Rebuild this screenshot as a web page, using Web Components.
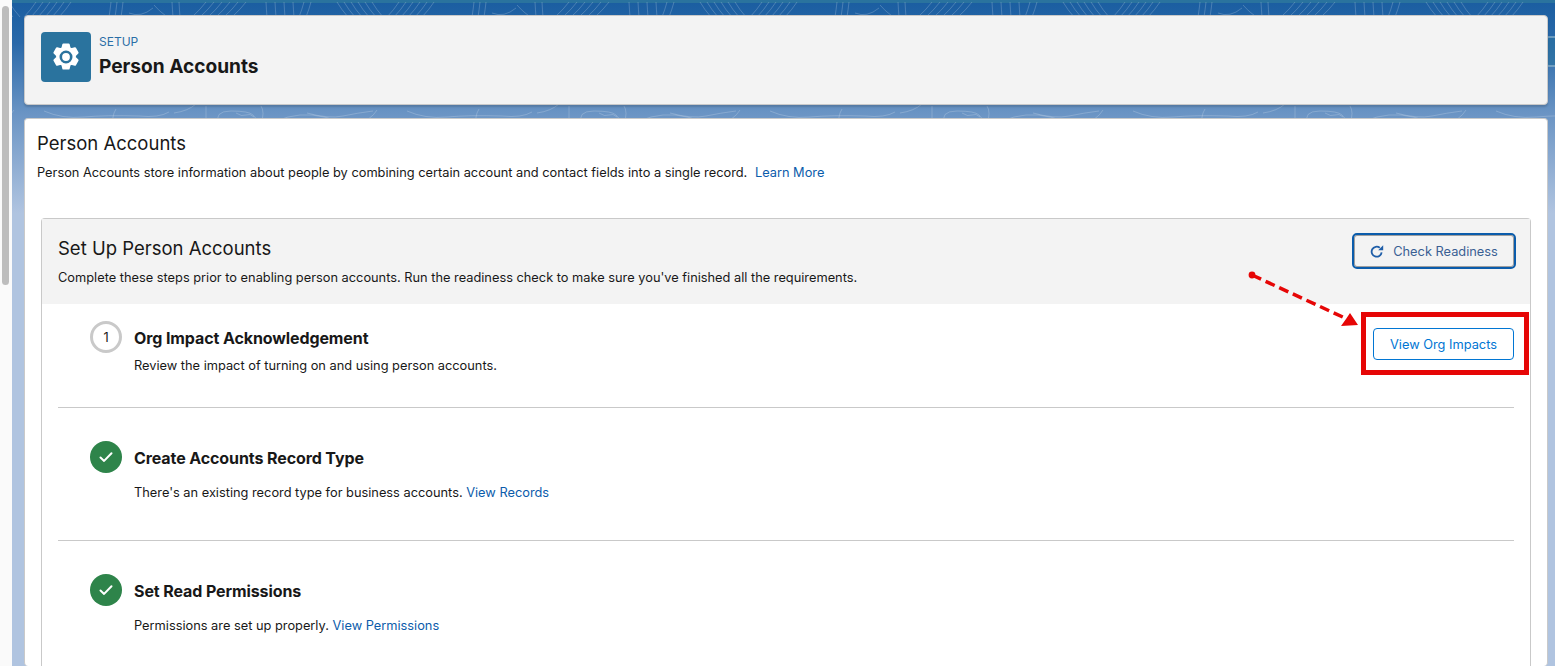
<!DOCTYPE html>
<html lang="en"><head><meta charset="utf-8"><title>Person Accounts</title>
<style>
html,body{margin:0;height:666px;overflow:hidden;background:#fff}
body{font-family:Inter,"Liberation Sans",sans-serif;color:#181818}
</style></head><body>
<setup-app>
  <page-header slot="header" eyebrow="SETUP" title="Person Accounts"></page-header>
  <intro-block title="Person Accounts" link="Learn More">Person Accounts store information about people by combining certain account and contact fields into a single record.</intro-block>
  <setup-panel title="Set Up Person Accounts" desc="Complete these steps prior to enabling person accounts. Run the readiness check to make sure you've finished all the requirements.">
    <setup-step num="1" title="Org Impact Acknowledgement" action="View Org Impacts" variant="first">Review the impact of turning on and using person accounts.</setup-step>
    <setup-step done title="Create Accounts Record Type" link="View Records">There's an existing record type for business accounts.</setup-step>
    <setup-step done title="Set Read Permissions" link="View Permissions">Permissions are set up properly.</setup-step>
  </setup-panel>
</setup-app>
<script>
const def=(n,f)=>customElements.define(n,class extends HTMLElement{connectedCallback(){if(!this.shadowRoot){this.attachShadow({mode:'open'}).innerHTML=f(this)}}});
const contours=(()=>{
  const hatch=(x,n,step,dx,h=15)=>{let s='';for(let i=0;i<n;i++)s+=`<path d="M${x+i*step} -1q${dx*.4} ${h*.5} ${dx} ${h}"/>`;return s};
  const tile=hatch(0,6,7,11)+hatch(62,6,7,-12)+hatch(137,3,6,-2)+`<path d="M155 10q12 5 24 -5"/><path d="M180 2q5 6 12 11"/>`+hatch(198,2,7,1)
    +hatch(232,6,8,-14)+hatch(292,4,9,1)+hatch(330,2,7,-5)
    +`<path d="M-30 110q22 6 36 3t30 -5"/><path d="M40 107q-6 10 -20 14"/><path d="M70 108q18 8 40 6t55 -1q20 2 30 -4"/><path d="M200 110q14 -2 22 -9"/><path d="M232 103v16"/><path d="M245 122q-6 -14 12 -14t22 4q8 8 4 12"/><path d="M262 110q6 4 10 2t8 2"/><path d="M287 103q4 6 0 18"/><path d="M302 118q24 -10 48 -4t20 8"/><path d="M-8 121q14 -8 34 -3"/><path d="M140 122q-3 -8 2 -16"/>`
    +`<path d="M12 30q4 14 0 30t6 30"/><path d="M20 60q-5 12 0 30"/>`;
  let s='';for(let i=-1;i<5;i++)s+=`<g transform="translate(${i*363+325} 3)">${tile}</g>`;return s})();
def('setup-app',()=>`<style>
:host{display:flex;width:1555px;height:666px;overflow:hidden}
.rail{flex:0 0 12px;background:#fafafa;padding:6px 0 0 2px;box-sizing:border-box}
.thumb{width:7px;height:279px;background:#bdbdbd;border-radius:4px}
.stage{position:relative;flex:1;min-width:0;padding:12px 7px 0 12px;box-sizing:border-box;display:flex;flex-direction:column;gap:13px;
 background:linear-gradient(#1b5ea1 0,#2a69a9 40px,#6a94c4 110px,#b0c4e0 210px,#b0c4e0 100%);border-top:3px solid #2a739e}
.lines{position:absolute;left:0;top:-3px;width:1543px;height:125px;fill:none;stroke:rgba(255,255,255,.2);stroke-width:1}
.tab{position:absolute;right:0;top:33px;width:10px;height:31px;box-sizing:border-box;border:2px solid rgba(255,255,255,.3);border-right:0;border-radius:4px 0 0 4px;background:rgba(42,115,158,.55)}
::slotted(*),.c{position:relative}
</style><div class="rail"><div class="thumb"></div></div>
<div class="stage"><svg class="lines" viewBox="0 0 1543 125" aria-hidden="true">${contours}</svg><span class="tab"></span><slot name="header"></slot><main-card class="c"><slot></slot></main-card></div>`);
def('main-card',()=>`<style>:host{display:block;background:#fff;border-radius:4px;border:1px solid #c9c9c9;border-bottom:0;padding:11px 16px 0 12px;flex:1;box-sizing:border-box;min-height:548px}</style><slot></slot>`);
def('page-header',e=>`<style>
:host{display:flex;flex:0 0 90px;align-items:flex-start;gap:8px;height:90px;box-sizing:border-box;padding:16px 16px 0;background:#f3f3f3;border:1px solid #c9c9c9;border-radius:4px;box-shadow:0 2px 2px rgba(0,0,0,.15)}
.ic{width:50px;height:50px;background:#2a739e;border-radius:4px;display:flex;align-items:center;justify-content:center}
.tx{margin-top:2px}
.eb{font-size:12px;line-height:15px;color:#2a6ea6;margin-bottom:4px}
h1{margin:0;font-size:19.1px;line-height:26px;font-weight:700;color:#181818}
</style><div class="ic"><svg width="30" height="30" viewBox="0 0 30 30"><path fill="#fff" stroke="#fff" stroke-width="2.200" stroke-linejoin="round" d="M12.400 2.600h5.200l.9 3.700 1.800 1 3.700-1 2.500 4.500-2.700 2.600v2.200l2.700 2.600-2.500 4.500-3.700-1-1.800 1-.9 3.700h-5.200l-.9-3.700-1.800-1-3.700 1-2.500-4.500 2.700-2.600v-2.200l-2.700-2.600 2.500-4.500 3.700 1 1.800-1z"/><circle cx="15" cy="15" r="5.200" fill="none" stroke="#2a739e" stroke-width="2.600"/></svg></div>
<div class="tx"><div class="eb">${e.getAttribute('eyebrow')}</div><h1>${e.getAttribute('title')}</h1></div>`);
def('intro-block',e=>`<style>
:host{display:block;height:88px}
h2{margin:0 0 7px;font-size:18.5px;line-height:26px;font-weight:400}
p{margin:0;font-size:12.8px;line-height:19px;white-space:nowrap}
a{color:#0b5cab;text-decoration:none;margin-left:4px}
</style><h2>${e.getAttribute('title')}</h2><p><slot></slot> <a href="#">${e.getAttribute('link')}</a></p>`);
def('setup-panel',e=>`<style>
:host{display:block;margin-left:4px;width:1490px;border:1px solid #c9c9c9;border-bottom:0;border-radius:4px 4px 0 0;height:460px;box-sizing:border-box;overflow:visible;position:relative}
header{height:85px;background:#f3f3f3;box-sizing:border-box;padding:16px 14px 0 16px;display:flex;justify-content:space-between;align-items:flex-start;position:relative}
h2{margin:0 0 7px;font-size:18.5px;line-height:26px;font-weight:400}
p{margin:0;font-size:12.8px;line-height:19px}
button{width:164px;height:36px;margin-top:-2px;background:#f3f3f3;border:2px solid #0b5cab;box-shadow:inset 0 0 0 1px rgba(90,90,90,.55);border-radius:5px;color:#3a5f93;font:400 12.8px Inter,"Liberation Sans",sans-serif;display:flex;align-items:center;justify-content:center;gap:9px;padding:0}
.steps{padding:0 16px}
.note{position:absolute;left:1207px;top:53px;width:290px;height:110px;overflow:visible;pointer-events:none}
.box{position:absolute;left:1319px;top:93px;width:168px;height:63px;box-sizing:border-box;border:5px solid #e60606}
</style><header><div><h2>${e.getAttribute('title')}</h2><p>${e.getAttribute('desc')}</p></div>
<button><svg width="14" height="14" viewBox="0 0 14 14" fill="none"><path d="M11.600 8.300A5 5 0 1 1 9.800 3.800" stroke="#1f5ea8" stroke-width="1.800"/><path d="M13.200 1.200v5H8.200z" fill="#1f5ea8"/></svg>Check Readiness</button></header>
<div class="steps"><slot></slot></div>
<div class="box"></div>
<svg class="note" viewBox="0 0 290 110" aria-hidden="true"><circle cx="3" cy="3" r="3.400" fill="#e60606"/><path d="M3 3 L98 47" stroke="#e60606" stroke-width="3.500" stroke-dasharray="10 5" fill="none"/><path d="M109 53 L92 54 L97 47 L101 41z" fill="#e60606"/></svg>`);
def('setup-step',e=>{const done=e.hasAttribute('done');const first=e.getAttribute('variant')==='first';return `<style>
:host{display:block;position:relative;box-sizing:border-box;height:${first?103.5:133}px;border-bottom:1px solid #c9c9c9;padding-top:${first?17:33}px;padding-left:32px}
:host(:last-of-type){border-bottom:0}
.row{display:flex;gap:12px}
.i{flex:0 0 32px;width:32px;height:32px;box-sizing:border-box;border-radius:50%;display:flex;align-items:center;justify-content:center}
.n{border:3px solid #c9c9c9;font-size:12.8px;background:#fff}
.d{background:#2e844a}
h3{margin:0;font-size:16px;line-height:20px;font-weight:700;padding-top:7px;letter-spacing:-.1px}
p{margin:${first?8:15}px 0 0;font-size:12.8px;line-height:19px}
a{color:#0b5cab;text-decoration:none}
button{position:absolute;right:0;top:24px;width:141px;height:32px;background:#fff;border:1px solid #0176d3;border-radius:4px;color:#0176d3;font:400 12.8px Inter,"Liberation Sans",sans-serif;padding:0}
</style><div class="row"><div class="i ${done?'d':'n'}">${done?'<svg width="16" height="16" viewBox="0 0 16 16" fill="none" stroke="#fff" stroke-width="2" stroke-linecap="round" stroke-linejoin="round"><path d="M2.500 8.500l3.600 3.400 7.400-7.600"/></svg>':e.getAttribute('num')}</div>
<div><h3>${e.getAttribute('title')}</h3><p><slot></slot>${e.getAttribute('link')?` <a href="#">${e.getAttribute('link')}</a>`:''}</p></div></div>
${e.getAttribute('action')?`<button>${e.getAttribute('action')}</button>`:''}`});
</script></body></html>
